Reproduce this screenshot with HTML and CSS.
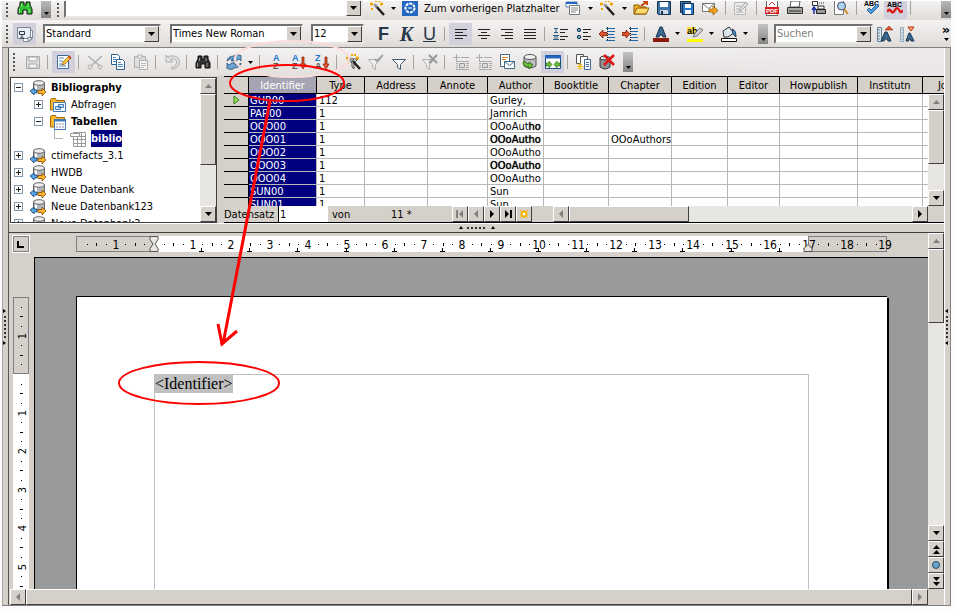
FILE: index.html
```html
<!DOCTYPE html>
<html lang="de">
  <head>
    <meta charset="UTF-8">
    <title>Writer</title>
    <link rel="stylesheet" href="styles.css">
  </head>
  <body>
    <svg class="defs">
      <symbol id="down" viewBox="0 0 7 4"><path d="M0 0h7L3.500 4z"/></symbol>
      <symbol id="up" viewBox="0 0 7 4"><path d="M0 4h7L3.500 0z"/></symbol>
      <symbol id="left" viewBox="0 0 4 8"><path d="M4 0v8L0 4z"/></symbol>
      <symbol id="right" viewBox="0 0 4 8"><path d="M0 0v8l4-4z"/></symbol>
      <symbol id="binoc" viewBox="0 0 16 16">
        <path d="M3 2h4v3h2V2h4v3l2 4v5h-5v-4H6v4H1V9l2-4z" fill="currentColor" stroke="#111"/>
        <path d="M4.500 4v3M2.500 9v4M11 4v3M12 9v4" stroke="#fff" opacity=".5"/>
      </symbol>
      <symbol id="wand" viewBox="0 0 16 16">
        <path d="M6 5l9 10" stroke="#222" stroke-width="2.500"/><path d="M5 4l3 3" stroke="#999" stroke-width="2"/>
        <path d="M1 4h3M2.500 2.500v3M6 1h2M11 4h3M12.500 2.500v3M2 9h2M9 1h2" stroke="#f0a800" stroke-width="2"/>
      </symbol>
      <symbol id="navi" viewBox="0 0 16 16">
        <path d="M0 0h16v16H0z" fill="#2467c2"/><circle cx="8" cy="8" r="4.500" fill="none" stroke="#fff" stroke-width="2" stroke-dasharray="3 1"/>
        <path d="M6 8h4" stroke="#fff"/>
      </symbol>
      <symbol id="form" viewBox="0 0 16 16">
        <path d="M1 2h11v5H1z" fill="#fff" stroke="#5a87b8"/><path d="M1 3h11" stroke="#2467c2" stroke-width="2"/>
        <path d="M4.500 5.500h10v9h-10z" fill="#fff" stroke="#777"/><path d="M6 8h7M6 10h7M6 12h5" stroke="#888"/>
      </symbol>
      <symbol id="open" viewBox="0 0 16 16">
        <path d="M1 14V5h5l1 2h6v7z" fill="#f7b32b" stroke="#8a5a00"/><path d="M1 14l3-6h12l-3 6z" fill="#ffd76a" stroke="#8a5a00"/>
        <path d="M8 6l5-4M10 1h4v4" stroke="#c9440b" stroke-width="2" fill="none"/>
      </symbol>
      <symbol id="save" viewBox="0 0 16 16">
        <path d="M1.500 1.500h13v13h-12l-1-1z" fill="#3f74ad" stroke="#14304f"/><path d="M4 2h8v5H4z" fill="#fff"/><path d="M4 10h8v4H4z" fill="#cfd8e3"/><path d="M5 11h2v3H5z" fill="#14304f"/>
      </symbol>
      <symbol id="saveas" viewBox="0 0 16 16">
        <path d="M1.500 1.500h10v11h-10z" fill="#3f74ad" stroke="#14304f"/><path d="M3.500 3.500h11v11h-11z" fill="#2b7bd0" stroke="#14304f"/><path d="M6 4h6v4H6zM6 10h6v4H6z" fill="#fff"/>
      </symbol>
      <symbol id="mail" viewBox="0 0 16 16">
        <path d="M.5 3.500h12v8H.5z" fill="#fff" stroke="#777"/><path d="M.5 3.500l6 5 6-5" fill="none" stroke="#777"/>
        <path d="M7 9h4V6l5 4.500-5 4.500v-3H7z" fill="#f6a21c" stroke="#8a4b00" stroke-width=".7"/>
      </symbol>
      <symbol id="edit" viewBox="0 0 16 16">
        <path d="M1.500 1.500h11v13h-11z" fill="#fff" stroke="#3d6b9e"/><path d="M3 4h5M3 7h4M3 10h3M3 12h7" stroke="#4b86c6"/>
        <path d="M6 11l1-3 6-6 2 2-6 6z" fill="#f7c53b" stroke="#8a5a00" stroke-width=".7"/><path d="M12 3l1.500-1.500 2 2L14 5z" fill="#d63b1f"/>
      </symbol>
      <symbol id="editoff" viewBox="0 0 16 16">
        <path d="M1.500 2.500h11v12h-11z" fill="#eee" stroke="#b5b5b5"/><path d="M3 6h5M3 9h3M3 12h7M6 11l1-3 6-6 2 2-6 6z" fill="#ddd" stroke="#aaa"/>
      </symbol>
      <symbol id="pdf" viewBox="0 0 16 16">
        <path d="M2.500.5h11v15h-11z" fill="#fff" stroke="#666"/><path d="M1 7h14v7H1z" fill="#d71f1f"/>
        <text x="2" y="13" class="pdftext">PDF</text><path d="M5 5l3-3 3 3" stroke="#b33" fill="none"/>
      </symbol>
      <symbol id="print" viewBox="0 0 16 16">
        <path d="M4 1h9l-1 6H3z" fill="#fff" stroke="#555"/><path d="M.5 7.500h15v6H.5z" fill="#a9a9a4" stroke="#333"/><path d="M2 11h12" stroke="#333"/>
      </symbol>
      <symbol id="preview" viewBox="0 0 16 16">
        <path d="M2.500 1.500h5v4h-5z" fill="#fff" stroke="#333"/><path d="M4 14V8M2 10l2-3 2 3" stroke="#1c2fa8" fill="none" stroke-width="1.500"/>
        <path d="M8 6h6v3H8z" fill="#fff" stroke="#333"/><path d="M6.500 9.500h9v4h-9z" fill="#999" stroke="#222"/><path d="M9 3h5" stroke="#333" stroke-dasharray="1 1"/>
      </symbol>
      <symbol id="zoom" viewBox="0 0 16 16">
        <path d="M1.500.5h9v14h-9z" fill="#fff" stroke="#777"/><circle cx="8.500" cy="6" r="4" fill="#a9d4ee" stroke="#446"/><path d="M11 9l4 5" stroke="#c98a2b" stroke-width="2"/>
      </symbol>
      <symbol id="spell" viewBox="0 0 16 16"><text x="0" y="6" class="abc">ABC</text><path d="M3 10l4 4 8-8-2-2-6 6-2-2z" fill="#4b9ae0" stroke="#174a80" stroke-width=".7"/></symbol>
      <symbol id="autospell" viewBox="0 0 16 16"><text x="0" y="7" class="abc">ABC</text><path d="M0 12q2-4 4-1t4-1 4 0 4 0" fill="none" stroke="#e01b1b" stroke-width="2.500"/></symbol>
      <symbol id="styles" viewBox="0 0 16 16">
        <path d="M6.500 4.500h9v8l-3 3h-6z" fill="#fff" stroke="#8a8f9e"/><path d="M.5 1.500h13v11H.5z" fill="#e8ecf3" stroke="#7a8496"/><path d="M2.500 5.500h5v3h-5zM5 8v4M3 12h4" fill="none" stroke="#333b4a"/><path d="M11 15.500v-4h4.500z" fill="#fff" stroke="#7a8496"/>
      </symbol>
      <symbol id="al" viewBox="0 0 16 16"><path d="M2 3.500h12M2 6.500h8M2 9.500h12M2 12.500h8" stroke="#222"/></symbol>
      <symbol id="ac" viewBox="0 0 16 16"><path d="M2 3.500h12M5 6.500h6M2 9.500h12M5 12.500h6" stroke="#222"/></symbol>
      <symbol id="ar" viewBox="0 0 16 16"><path d="M2 3.500h12M6 6.500h8M2 9.500h12M6 12.500h8" stroke="#222"/></symbol>
      <symbol id="aj" viewBox="0 0 16 16"><path d="M2 3.500h12M2 6.500h12M2 9.500h12M2 12.500h12" stroke="#222"/></symbol>
      <symbol id="num" viewBox="0 0 16 16"><path d="M1 2.500h4M3 2v5M1 6.500h4M0 9.500h6M2 9v5M4 9v5M0 13.500h6" stroke="#2a5b80"/><path d="M7 3.500h8M7 6.500h5M7 10.500h8M7 13.500h5" stroke="#222"/></symbol>
      <symbol id="bul" viewBox="0 0 16 16"><circle cx="3" cy="4" r="1.700" fill="#6ab" stroke="#135"/><circle cx="3" cy="11" r="1.700" fill="#6ab" stroke="#135"/><path d="M7 3.500h8M7 6.500h5M7 10.500h8M7 13.500h5" stroke="#222"/></symbol>
      <symbol id="outd" viewBox="0 0 16 16"><path d="M7 2.500h9M9 5.500h7M9 8.500h6M9 11.500h7M7 14.500h9" stroke="#2467a8"/><path d="M8.500 1v14" stroke="#222" stroke-dasharray="1 1"/><path d="M0 8l4-4v2.500h4v3H4V12z" fill="#e2552b" stroke="#7a1c00" stroke-width=".8"/></symbol>
      <symbol id="ind" viewBox="0 0 16 16"><path d="M7 2.500h9M9 5.500h7M9 8.500h6M9 11.500h7M7 14.500h9" stroke="#2467a8"/><path d="M8.500 1v14" stroke="#222" stroke-dasharray="1 1"/><path d="M8 8L4 4v2.500H0v3h4V12z" fill="#e2552b" stroke="#7a1c00" stroke-width=".8"/></symbol>
      <symbol id="fcolor" viewBox="0 0 16 16"><path d="M3 11L7 1h2l4 10h-3L9.500 9h-3L6 11z" fill="#3c6a90" stroke="#14304f"/><path d="M0 12h16v4H0z" fill="#8b1a0e"/></symbol>
      <symbol id="hilite" viewBox="0 0 16 16"><path d="M0 1h9v7H0z" fill="#ffe14a"/><text x="0" y="8" class="abl">ab</text><path d="M6 11l2-4 5-5 3 2-6 6z" fill="#ccc" stroke="#555" stroke-width=".7"/><path d="M0 13h16v3H0z" fill="#ff0"/></symbol>
      <symbol id="bucket" viewBox="0 0 16 16"><path d="M2 5l6-4 5 6-6 4H3z" fill="#d9e4ea" stroke="#333"/><path d="M11 3q4 1 4 8l-3-3z" fill="#4a9ad4" stroke="#235"/><path d="M.5 12.500h15v3H.5z" fill="#fff" stroke="#111"/></symbol>
      <symbol id="aup" viewBox="0 0 16 16"><path d="M.5 1.500h4v14h-4zM1 4h2M1 7h2M1 10h2M1 13h2" fill="#dce6ee" stroke="#6a8296"/><path d="M4 15l4-9h2l4 9h-3l-.5-2h-3L7 15z" fill="#3c6a90" stroke="#14304f"/><path d="M8 4l4-4 4 4z" fill="#e2552b" stroke="#7a1c00" stroke-width=".5"/></symbol>
      <symbol id="adown" viewBox="0 0 16 16"><path d="M.5 1.500h3v14h-3zM1 4h2M1 7h2M1 10h2M1 13h2" fill="#dce6ee" stroke="#9aacba"/><path d="M6 15l3-8h1l4 8h-3l-.5-2H9l-.5 2z" fill="#3c6a90" stroke="#14304f"/><path d="M8 1h6l-3 4z" fill="#ffb08a" stroke="#c02a00"/></symbol>
      <symbol id="saveoff" viewBox="0 0 16 16"><path d="M1.500 2.500h13v12h-13z" fill="#ddd" stroke="#aaa"/><path d="M4 3h8v4H4zM4 10h8v4H4z" fill="#f4f4f4" stroke="#aaa"/></symbol>
      <symbol id="cut" viewBox="0 0 16 16"><path d="M1 2l12 10M15 2L4 12" stroke="#b0b0b0" stroke-width="1.500"/><circle cx="3" cy="13" r="2" fill="none" stroke="#b0b0b0"/><circle cx="13" cy="13" r="2" fill="none" stroke="#b0b0b0"/></symbol>
      <symbol id="copy" viewBox="0 0 16 16"><path d="M1.500.5h6l2 2v8h-8z" fill="#fff" stroke="#2d6391"/><path d="M6.500 5.500h6l2 2v8h-8z" fill="#fff" stroke="#2d6391"/><path d="M3 3.500h3M3 5.500h3M3 7.500h3M8 8.500h3M8 10.500h5M8 12.500h5" stroke="#4b8cc2"/></symbol>
      <symbol id="paste" viewBox="0 0 16 16"><path d="M1.500 2.500h11v11h-11z" fill="#ddd" stroke="#b0b0b0"/><path d="M5 1h4v3H5zM6.500 6.500h8v9h-8z" fill="#f4f4f4" stroke="#b0b0b0"/><path d="M8 9.500h5M8 11.500h5M8 13.500h3" stroke="#bbb"/></symbol>
      <symbol id="undo" viewBox="0 0 16 16"><path d="M2 1v7h7L6.500 5.500q5-2 6 2T7 14l2 1.500q7-3 6.500-8T9 2 4.500 3.500z" fill="#e0e0e0" stroke="#b0b0b0"/></symbol>
      <symbol id="refresh" viewBox="0 0 16 16"><path d="M1 7q1-5 7-5l2-1.500 5 1V7l-2-2-3 2H5l2-2Q4 4 1 7zM15 9q-1 5-7 5l-2 1.500-5-1V9l2 2 3-2h5l-2 2q3 1 6-2z" fill="#6fa5cf" stroke="#1f4c75" stroke-width=".8"/></symbol>
      <symbol id="sort" viewBox="0 0 16 16"><text x="5" y="7" class="sa">A</text><text x="5" y="15" class="sz">Z</text></symbol>
      <symbol id="sortaz" viewBox="0 0 16 16"><text x="1" y="7" class="sa">A</text><text x="1" y="15" class="sz">Z</text><path d="M11 3h2v7h2l-3 5-3-5h2z" fill="#e2552b" stroke="#7a1c00" stroke-width=".7"/></symbol>
      <symbol id="sortza" viewBox="0 0 16 16"><text x="1" y="7" class="sa">Z</text><text x="1" y="15" class="sz">A</text><path d="M11 3h2v7h2l-3 5-3-5h2z" fill="#e2552b" stroke="#7a1c00" stroke-width=".7"/></symbol>
      <symbol id="funnel" viewBox="0 0 16 16"><path d="M1.500 5.500h13l-5 5v5l-3-2v-3z" fill="#f6f6f6" stroke="#445a6c"/></symbol>
      <symbol id="autofilter" viewBox="0 0 16 16"><path d="M3 5h10L9 9v6l-2-2V9z" fill="#eee" stroke="#444"/><use href="#wand"/></symbol>
      <symbol id="filteron" viewBox="0 0 16 16"><path d="M.5 5.500h12l-5 5v5l-3-2v-3z" fill="#eee" stroke="#b0b0b0"/><path d="M7 5l2 2 6-6" stroke="#a5a5a5" fill="none" stroke-width="2"/></symbol>
      <symbol id="filteroff" viewBox="0 0 16 16"><path d="M.5 5.500h12l-5 5v5l-3-2v-3z" fill="#eee" stroke="#b0b0b0"/><path d="M7 1l8 8M15 1L7 9" stroke="#999" stroke-width="2"/></symbol>
      <symbol id="totext" viewBox="0 0 16 16"><path d="M3.500 0v7M0 3.500h7M8 3.500h8M3 7.500h13M3 9.500h2M3 11.500h2M3 13.500h2M13 9.500h3M13 11.500h3M13 13.500h3M3 15.500h13" stroke="#aaa"/><path d="M6.500 9.500h5v4h-5z" fill="#ddd" stroke="#999"/></symbol>
      <symbol id="mailmerge" viewBox="0 0 16 16"><path d="M1.500.5h9v12h-9z" fill="#fff" stroke="#3f6a8a"/><path d="M3 3.500h6M3 5.500h4" stroke="#e07a20"/><path d="M5.500 7.500h10v7h-10z" fill="#fff" stroke="#3f6a8a"/><path d="M5.500 7.500l5 4 5-4" fill="none" stroke="#3f6a8a"/></symbol>
      <symbol id="dbsrc" viewBox="0 0 16 16"><path d="M2 3v9q6 4 12 0V3z" fill="#b9bdc2" stroke="#555"/><ellipse cx="8" cy="3" rx="6" ry="2.500" fill="#eee" stroke="#555"/><path d="M1 8q0 5 6 5v2l4-4-4-3v2q-3 0-4-3z" fill="#6cbf3a" stroke="#24610b" stroke-width=".8"/></symbol>
      <symbol id="explorer" viewBox="0 0 16 16"><path d="M.5 1.500h15v13H.5z" fill="#fff" stroke="#1d4f86"/><path d="M0 3h16" stroke="#2467c2" stroke-width="3"/><path d="M1 9h3V7l3 3.500L4 14v-2H1zM15 9h-3V7l-3 3.500 3 3.500v-2h3z" fill="#6cbf3a" stroke="#24610b" stroke-width=".6"/></symbol>
      <symbol id="docs" viewBox="0 0 16 16"><path d="M.5.5h7v9h-7z" fill="#fff" stroke="#555"/><path d="M4.500 2.500h7v10h-7z" fill="#fff" stroke="#555"/><path d="M8.500 5.500h6v10h-6z" fill="#fff" stroke="#3f6a9a"/><path d="M10 8.500h3M10 10.500h3M10 12.500h3" stroke="#3f6a9a"/><path d="M4 9v7M1 12.500h7M2 10l4 5M6 10l-4 5" stroke="#f3c321"/></symbol>
      <symbol id="dbdel" viewBox="0 0 16 16"><path d="M1 4v9q5 4 10 0V4z" fill="#8f9297" stroke="#333"/><ellipse cx="6" cy="4" rx="5" ry="2" fill="#ddd" stroke="#333"/><path d="M5 1l10 10M15 1L5 11" stroke="#e01515" stroke-width="2.500"/></symbol>
      <symbol id="db" viewBox="0 0 16 16"><path d="M3.500 3v7q5 3 11 0V3z" fill="#b4b8bd" stroke="#666"/><path d="M6 5v6" stroke="#fff" stroke-width="2"/><ellipse cx="9" cy="3" rx="5.500" ry="2.300" fill="#eee" stroke="#666"/><path d="M0 11l4-3v2h3v3H4v2z" fill="#58a7e8" stroke="#143f70" stroke-width=".8"/><path d="M16 12l-4-4v2.500H8v3h4V16z" fill="#ffb52b" stroke="#8a4b00" stroke-width=".8"/></symbol>
      <symbol id="fquery" viewBox="0 0 16 16"><path d="M.5 13V2.500l1-1h4l1 2h8V13z" fill="#f9b92f" stroke="#a36a00"/><path d="M3.500 5.500h12v9h-12z" fill="#fff" stroke="#3f7ab8"/><path d="M5.500 9.500h5v3h-5zM8.500 7.500h5v3h-5z" fill="#cfe2f5" stroke="#3f7ab8"/></symbol>
      <symbol id="ftable" viewBox="0 0 16 16"><path d="M.5 13V2.500l1-1h4l1 2h8V13z" fill="#f9b92f" stroke="#a36a00"/><path d="M4.500 5.500h11v10h-11z" fill="#fff" stroke="#3f7ab8"/><path d="M4 6.500h12" stroke="#3f7ab8" stroke-width="2"/><path d="M6 10h8M6 13h8" stroke="#88a" stroke-dasharray="2 1"/></symbol>
      <symbol id="table" viewBox="0 0 16 16"><path d="M3.500 1.500h12v14h-12zM3 5.500h12M3 8.500h12M3 12.500h12M7.500 1v14M11.500 1v14" fill="#fff" stroke="#999"/><path d="M.5 2.500h9v3h-9z" fill="#fff" stroke="#999"/></symbol>
    </svg>

    <div class="app">
      <div class="toolbar url-bar">
        <i class="grip"></i>
        <button class="tool find"><svg class="ico"><use href="#binoc"/></svg></button>
        <button class="more"><svg class="arr"><use href="#down"/></svg></button>
        <i class="grip"></i>
        <div class="combo load-url"><input type="text" aria-label="URL"><button class="drop"><svg class="arr"><use href="#down"/></svg></button></div>
        <button class="tool"><svg class="ico"><use href="#wand"/></svg></button>
        <button class="dd"><svg class="arr"><use href="#down"/></svg></button>
        <button class="tool label"><svg class="ico"><use href="#navi"/></svg><span>Zum vorherigen Platzhalter</span></button>
        <button class="tool"><svg class="ico"><use href="#form"/></svg></button>
        <button class="dd"><svg class="arr"><use href="#down"/></svg></button>
        <button class="tool"><svg class="ico"><use href="#wand"/></svg></button>
        <button class="dd"><svg class="arr"><use href="#down"/></svg></button>
        <button class="tool"><svg class="ico"><use href="#open"/></svg></button>
        <button class="tool"><svg class="ico"><use href="#save"/></svg></button>
        <button class="tool"><svg class="ico"><use href="#saveas"/></svg></button>
        <button class="tool"><svg class="ico"><use href="#mail"/></svg></button>
        <i class="sep"></i>
        <button class="tool"><svg class="ico"><use href="#editoff"/></svg></button>
        <i class="sep"></i>
        <button class="tool"><svg class="ico"><use href="#pdf"/></svg></button>
        <button class="tool"><svg class="ico"><use href="#print"/></svg></button>
        <button class="tool"><svg class="ico"><use href="#preview"/></svg></button>
        <button class="tool"><svg class="ico"><use href="#zoom"/></svg></button>
        <i class="sep"></i>
        <button class="tool"><svg class="ico"><use href="#spell"/></svg></button>
        <button class="tool on"><svg class="ico"><use href="#autospell"/></svg></button>
        <i class="sep"></i>
        <button class="more end"><svg class="arr"><use href="#down"/></svg></button>
      </div>

      <div class="toolbar format-bar">
        <i class="grip"></i>
        <button class="tool on"><svg class="ico"><use href="#styles"/></svg></button>
        <div class="combo style-name"><select aria-label="Vorlage"><option>Standard</option></select><button class="drop"><svg class="arr"><use href="#down"/></svg></button></div>
        <div class="combo font-name"><select aria-label="Schriftart"><option>Times New Roman</option></select><button class="drop"><svg class="arr"><use href="#down"/></svg></button></div>
        <div class="combo font-size"><select aria-label="Schriftgröße"><option>12</option></select><button class="drop"><svg class="arr"><use href="#down"/></svg></button></div>
        <button class="tool char bold">F</button>
        <button class="tool char italic">K</button>
        <button class="tool char under">U</button>
        <i class="sep"></i>
        <button class="tool on"><svg class="ico"><use href="#al"/></svg></button>
        <button class="tool"><svg class="ico"><use href="#ac"/></svg></button>
        <button class="tool"><svg class="ico"><use href="#ar"/></svg></button>
        <button class="tool"><svg class="ico"><use href="#aj"/></svg></button>
        <i class="sep"></i>
        <button class="tool"><svg class="ico"><use href="#num"/></svg></button>
        <button class="tool"><svg class="ico"><use href="#bul"/></svg></button>
        <button class="tool"><svg class="ico"><use href="#outd"/></svg></button>
        <button class="tool"><svg class="ico"><use href="#ind"/></svg></button>
        <i class="sep"></i>
        <button class="tool"><svg class="ico"><use href="#fcolor"/></svg></button>
        <button class="dd"><svg class="arr"><use href="#down"/></svg></button>
        <button class="tool"><svg class="ico"><use href="#hilite"/></svg></button>
        <button class="dd"><svg class="arr"><use href="#down"/></svg></button>
        <button class="tool"><svg class="ico"><use href="#bucket"/></svg></button>
        <button class="dd"><svg class="arr"><use href="#down"/></svg></button>
        <button class="more"><svg class="arr"><use href="#down"/></svg></button>
        <div class="combo search"><input type="text" placeholder="Suchen" aria-label="Suchen"><button class="drop"><svg class="arr"><use href="#down"/></svg></button></div>
        <button class="tool"><svg class="ico"><use href="#aup"/></svg></button>
        <button class="tool"><svg class="ico"><use href="#adown"/></svg></button>
        <button class="more end"><span>»</span><svg class="arr"><use href="#down"/></svg></button>
      </div>

      <div class="frame">
        <div class="dock"><svg class="dock-grip" viewBox="0 0 4 36"><path d="M0 0l3 2-3 2zM0 32l3 2-3 2z"/><path d="M2 7v22" stroke="#333" stroke-width="2" stroke-dasharray="2 2"/></svg></div>
        <div class="inner">
          <div class="toolbar table-bar">
            <i class="grip"></i>
            <button class="tool first"><svg class="ico"><use href="#saveoff"/></svg></button>
            <i class="sep"></i>
            <button class="tool on"><svg class="ico"><use href="#edit"/></svg></button>
            <i class="sep"></i>
            <button class="tool"><svg class="ico"><use href="#cut"/></svg></button>
            <button class="tool"><svg class="ico"><use href="#copy"/></svg></button>
            <button class="tool"><svg class="ico"><use href="#paste"/></svg></button>
            <i class="sep"></i>
            <button class="tool"><svg class="ico"><use href="#undo"/></svg></button>
            <i class="sep"></i>
            <button class="tool"><svg class="ico"><use href="#binoc"/></svg></button>
            <i class="sep"></i>
            <button class="tool"><svg class="ico"><use href="#refresh"/></svg></button>
            <button class="dd"><svg class="arr"><use href="#down"/></svg></button>
            <i class="sep"></i>
            <button class="tool"><svg class="ico"><use href="#sort"/></svg></button>
            <button class="tool"><svg class="ico"><use href="#sortaz"/></svg></button>
            <button class="tool"><svg class="ico"><use href="#sortza"/></svg></button>
            <i class="sep"></i>
            <button class="tool"><svg class="ico"><use href="#autofilter"/></svg></button>
            <button class="tool"><svg class="ico"><use href="#filteron"/></svg></button>
            <button class="tool"><svg class="ico"><use href="#funnel"/></svg></button>
            <i class="sep"></i>
            <button class="tool"><svg class="ico"><use href="#filteroff"/></svg></button>
            <i class="sep"></i>
            <button class="tool"><svg class="ico"><use href="#totext"/></svg></button>
            <button class="tool"><svg class="ico"><use href="#totext"/></svg></button>
            <button class="tool"><svg class="ico"><use href="#mailmerge"/></svg></button>
            <button class="tool"><svg class="ico"><use href="#dbsrc"/></svg></button>
            <button class="tool on"><svg class="ico"><use href="#explorer"/></svg></button>
            <i class="sep"></i>
            <button class="tool"><svg class="ico"><use href="#docs"/></svg></button>
            <button class="tool"><svg class="ico"><use href="#dbdel"/></svg></button>
            <button class="more"><svg class="arr"><use href="#down"/></svg></button>
          </div>

          <div class="sources">
            <div class="explorer">
              <ul class="tree">
                <li><i class="box minus"></i><svg class="ico"><use href="#db"/></svg><b>Bibliography</b></li>
                <li class="l2"><i class="box plus"></i><svg class="ico"><use href="#fquery"/></svg><span>Abfragen</span></li>
                <li class="l2"><i class="box minus"></i><svg class="ico"><use href="#ftable"/></svg><b>Tabellen</b></li>
                <li class="l3"><i class="elbow"></i><svg class="ico"><use href="#table"/></svg><b class="picked">biblio</b></li>
                <li><i class="box plus"></i><svg class="ico"><use href="#db"/></svg><span>ctimefacts_3.1</span></li>
                <li><i class="box plus"></i><svg class="ico"><use href="#db"/></svg><span>HWDB</span></li>
                <li><i class="box plus"></i><svg class="ico"><use href="#db"/></svg><span>Neue Datenbank</span></li>
                <li><i class="box plus"></i><svg class="ico"><use href="#db"/></svg><span>Neue Datenbank123</span></li>
                <li><i class="box plus"></i><svg class="ico"><use href="#db"/></svg><span>Neue Datenbank2</span></li>
              </ul>
              <div class="vscroll">
                <button class="bevel off"><svg class="arr"><use href="#up"/></svg></button>
                <i class="thumb tree-thumb"></i><i class="track"></i>
                <button class="bevel"><svg class="arr"><use href="#down"/></svg></button>
              </div>
            </div>

            <div class="browser">
              <div class="grid">
                <table>
                  <colgroup><col><col><col><col><col><col><col><col><col><col><col><col><col></colgroup>
                  <thead>
                    <tr><th></th><th class="sel">Identifier</th><th>Type</th><th>Address</th><th>Annote</th><th>Author</th><th>Booktitle</th><th>Chapter</th><th>Edition</th><th>Editor</th><th>Howpublish</th><th>Institutn</th><th>Journal</th></tr>
                  </thead>
                  <tbody>
                    <tr><th><svg class="current" viewBox="0 0 7 10"><path d="M1 1v8l5-4z" fill="#9be35a" stroke="#2a7a10"/></svg></th><td class="sel">GUR00</td><td>112</td><td></td><td></td><td>Gurley,</td><td></td><td></td><td></td><td></td><td></td><td></td><td></td></tr>
                    <tr><th></th><td class="sel">PAR00</td><td>1</td><td></td><td></td><td>Jamrich</td><td></td><td></td><td></td><td></td><td></td><td></td><td></td></tr>
                    <tr><th></th><td class="sel">OOO00</td><td>1</td><td></td><td></td><td>OOoAut<span class="heavy">ho</span></td><td></td><td></td><td></td><td></td><td></td><td></td><td></td></tr>
                    <tr><th></th><td class="sel">OOO01</td><td>1</td><td></td><td></td><td class="heavy">OOoAutho</td><td></td><td>OOoAuthors</td><td></td><td></td><td></td><td></td><td></td></tr>
                    <tr><th></th><td class="sel">OOO02</td><td>1</td><td></td><td></td><td>OOoAutho</td><td></td><td></td><td></td><td></td><td></td><td></td><td></td></tr>
                    <tr><th></th><td class="sel">OOO03</td><td>1</td><td></td><td></td><td class="heavy">OOoAutho</td><td></td><td></td><td></td><td></td><td></td><td></td><td></td></tr>
                    <tr><th></th><td class="sel">OOO04</td><td>1</td><td></td><td></td><td>OOoAutho</td><td></td><td></td><td></td><td></td><td></td><td></td><td></td></tr>
                    <tr><th></th><td class="sel">SUN00</td><td>1</td><td></td><td></td><td>Sun</td><td></td><td></td><td></td><td></td><td></td><td></td><td></td></tr>
                    <tr><th></th><td class="sel">SUN01</td><td>1</td><td></td><td></td><td>Sun</td><td></td><td></td><td></td><td></td><td></td><td></td><td></td></tr>
                  </tbody>
                </table>
                <div class="vscroll grid-scroll">
                  <button class="bevel off"><svg class="arr"><use href="#up"/></svg></button>
                  <i class="thumb grid-thumb"></i><i class="track"></i>
                  <button class="bevel"><svg class="arr"><use href="#down"/></svg></button>
                </div>
              </div>
              <div class="record-bar">
                <label for="record">Datensatz</label>
                <input id="record" type="text" value="1">
                <span class="of">von</span><span class="count">11 *</span>
                <button class="bevel off"><svg class="nav" viewBox="0 0 8 8"><path d="M1 0v8" stroke="#808080" stroke-width="2"/><path d="M7 0v8L3 4z"/></svg></button>
                <button class="bevel off"><svg class="side"><use href="#left"/></svg></button>
                <button class="bevel"><svg class="side"><use href="#right"/></svg></button>
                <button class="bevel"><svg class="nav" viewBox="0 0 8 8"><path d="M7 0v8" stroke="#000" stroke-width="2"/><path d="M1 0v8l4-4z"/></svg></button>
                <button class="bevel"><svg class="nav" viewBox="0 0 8 8"><circle cx="4" cy="4" r="2.500" fill="#fff" stroke="#f5b400" stroke-width="2"/><path d="M0 0l2 2M8 0L6 2M0 8l2-2M8 8L6 6" stroke="#f5b400"/></svg></button>
                <div class="hscroll">
                  <button class="bevel off"><svg class="side"><use href="#left"/></svg></button>
                  <i class="thumb hthumb"></i><i class="track"></i>
                  <button class="bevel"><svg class="side"><use href="#right"/></svg></button>
                </div>
              </div>
            </div>
          </div>

          <div class="splitter"><svg class="split-grip" viewBox="0 0 36 4"><path d="M0 3l2-3 2 3zM32 3l2-3 2 3z"/><path d="M8 2h20" stroke="#333" stroke-width="2" stroke-dasharray="2 2"/></svg></div>

          <div class="writer">
            <div class="sheet">
              <div class="ruler-row">
                <button class="tabstop" aria-label="Tabulator"><svg viewBox="0 0 8 8"><path d="M1 1v6h6" fill="none" stroke="#000" stroke-width="2"/></svg></button>
                <svg id="hruler" class="hruler"></svg>
              </div>
              <div class="canvas-row">
                <svg id="vruler" class="vruler"></svg>
                <div class="canvas">
                  <div class="page"><div class="text-area"><span class="field">&lt;Identifier&gt;</span></div></div>
                </div>
              </div>
            </div>
            <div class="vscroll">
              <button class="bevel off"><svg class="arr"><use href="#up"/></svg></button>
              <i class="thumb doc-thumb"></i><i class="track"></i>
              <button class="bevel"><svg class="arr"><use href="#down"/></svg></button>
              <button class="bevel stack"><svg class="arr"><use href="#up"/></svg><svg class="arr"><use href="#up"/></svg></button>
              <button class="bevel"><svg class="nav" viewBox="0 0 8 8"><circle cx="4" cy="4" r="3.500" fill="#6ba3c9" stroke="#1f4a6b"/></svg></button>
              <button class="bevel stack"><svg class="arr"><use href="#down"/></svg><svg class="arr"><use href="#down"/></svg></button>
            </div>
          </div>
          <div class="hscroll doc-hscroll">
            <button class="bevel off"><svg class="side"><use href="#left"/></svg></button>
            <i class="thumb wide"></i>
            <button class="bevel off"><svg class="side"><use href="#right"/></svg></button>
          </div>
        </div>
        <div class="dock right"><svg class="dock-grip" viewBox="0 0 4 36"><path d="M3 0L0 2l3 2zM3 32l-3 2 3 2z"/><path d="M2 7v22" stroke="#333" stroke-width="2" stroke-dasharray="2 2"/></svg></div>
      </div>
    </div>

    <!-- drag and drop marks -->
    <svg class="marks" width="400" height="420">
      <ellipse class="faint" cx="292" cy="59" rx="57" ry="18"/>
      <ellipse cx="287" cy="83" rx="57" ry="18"/>
      <path class="thick" d="M270 101L223 344M218 324l4 20 15-13"/>
      <ellipse cx="199" cy="383" rx="80" ry="21"/>
    </svg>

    <script src="ruler.js"></script>
  </body>
</html>
```
FILE: styles.css
```css
*{
    box-sizing: border-box;
}
body{
    margin: 0;
    background: #fdfcfd;
    font: 11px/13px "DejaVu Sans Condensed", "DejaVu Sans", sans-serif;
    color: #000;
}
button, input, select{
    margin: 0;
    padding: 0;
    border: 0;
    border-radius: 0;
    background: none;
    font: inherit;
    color: inherit;
    outline: 0;
}
.defs{
    display: none;
}
.app{
    display: flex;
    flex-direction: column;
    height: calc(100vh - 5px);
    margin: 0 5px 0 2px;
    border-bottom: 1px solid #808080;
    background: #d5d1ca;
}

/* toolbars */
.toolbar{
    display: flex;
    flex: none;
    align-items: center;
    overflow: hidden;
    background: linear-gradient(#f4f2f2, #dedbd7);
}
.url-bar{
    height: 20px;
    padding-bottom: 5px;
    border-top: 1px solid #fff;
}
.format-bar{
    height: 28px;
    border-bottom: 1px solid #808080;
}
.table-bar{
    height: 28px;
    background: linear-gradient(90deg, transparent 60%, #ece8e9), linear-gradient(#f4f2f2, #e2dfdc);
}
.grip{
    flex: none;
    width: 2px;
    height: 18px;
    margin: 0 5px 0 4px;
    background: repeating-linear-gradient(#555 0 2px, transparent 2px 4px);
}
.tool{
    display: flex;
    flex: none;
    align-items: center;
    justify-content: center;
    width: 23px;
    height: 22px;
}
.on{
    background: #d3d0dd;
}
.label{
    width: auto;
    margin-right: 2px;
    padding-left: 3px;
    gap: 6px;
    white-space: nowrap;
}
.ico{
    flex: none;
    width: 16px;
    height: 16px;
    color: #333;
}
.find .ico{
    color: #2fc42f;
}
.arr{
    display: block;
    width: 7px;
    height: 4px;
}
.side{
    display: block;
    width: 4px;
    height: 8px;
}
.nav{
    display: block;
    width: 8px;
    height: 8px;
}
.dd{
    display: flex;
    flex: none;
    justify-content: center;
    width: 11px;
}
.dd .arr{
    width: 5px;
    height: 3px;
}
.sep{
    flex: none;
    width: 1px;
    height: 14px;
    margin: 0 4px 0 3px;
    background: #a5a29d;
}
.more{
    display: flex;
    flex: none;
    flex-direction: column;
    align-items: center;
    justify-content: flex-end;
    width: 10px;
    height: 20px;
    padding-bottom: 3px;
    background: linear-gradient(#c4c2c0, #858585);
}
.more .arr{
    width: 5px;
    height: 3px;
}
.end{
    margin-left: auto;
}
.find + .more{
    margin: 0 2px 0 5px;
}
.combo{
    display: flex;
    flex: none;
    height: 20px;
    border: 2px solid;
    border-color: #707070 #e8e6e2 #e8e6e2 #707070;
    background: #fff;
}
.combo select, .combo input{
    flex: 1;
    min-width: 0;
    padding-left: 1px;
    appearance: none;
}
.combo input::placeholder{
    color: #808080;
}
.drop{
    display: flex;
    flex: none;
    align-items: center;
    justify-content: center;
    width: 15px;
    border: 1px solid;
    border-color: #fff #404040 #404040 #fff;
    background: #d5d1ca;
}
.load-url{
    flex: 1;
    max-width: 299px;
    margin-right: 2px;
}
.style-name{
    width: 118px;
    margin: 0 9px 0 7px;
}
.font-name{
    width: 133px;
    margin-right: 8px;
}
.font-size{
    width: 53px;
    margin-right: 8px;
}
.search{
    width: 99px;
    margin: 0 0 0 6px;
}
.format-bar .more:not(.end){
    margin-left: 7px;
}
.format-bar .more span{
    font: bold 13px/12px "DejaVu Sans", sans-serif;
}
.format-bar .end{
    background: none;
    justify-content: space-between;
}
.char{
    color: #27374a;
    font: bold 18px/20px "Liberation Sans", Arial, sans-serif;
}
.italic{
    font-family: "Liberation Serif", serif;
    font-style: italic;
    font-size: 20px;
}
.under{
    font-weight: normal;
    text-decoration: underline;
}
.first{
    margin-left: 1px;
}
.table-bar .more{
    margin-left: 5px;
}
.pdftext{
    font: bold 6px "Liberation Sans", sans-serif;
    fill: #fff;
}
.abc{
    font: bold 7px "Liberation Sans", sans-serif;
}
.abl{
    font: bold 9px "Liberation Sans", sans-serif;
}
.sa, .sz{
    font: bold 9px "Liberation Sans", sans-serif;
    fill: #1b76d0;
}
.sz{
    fill: #555;
}

/* bevelled parts */
.bevel, .thumb{
    display: flex;
    flex: none;
    align-items: center;
    justify-content: center;
    width: 16px;
    height: 16px;
    border: 1px solid;
    border-color: #fff #404040 #404040 #fff;
    background: #d5d1ca;
}
.off{
    fill: #808080;
}
.stack{
    flex-direction: column;
    gap: 1px;
}
.track{
    flex: 1;
}
.vscroll{
    display: flex;
    flex: none;
    flex-direction: column;
    width: 16px;
    background: #e8e6e1;
}
.hscroll{
    display: flex;
    height: 16px;
    background: #e8e6e1;
}
.tree-thumb{
    height: 71px;
}
.grid-thumb{
    height: 54px;
}
.doc-thumb{
    height: 74px;
}
.hthumb{
    width: 120px;
}
.wide{
    flex: 1;
}

/* frame */
.frame{
    display: flex;
    flex: 1;
    min-height: 0;
}
.dock{
    display: flex;
    flex: none;
    align-items: center;
    width: 7px;
    border-left: 1px solid #a9a6a0;
    border-right: 1px solid #555;
}
.right{
    border-left: 1px solid #fff;
    border-right: 1px solid #808080;
}
.dock-grip{
    width: 4px;
    height: 36px;
}
.inner{
    display: flex;
    flex: 1;
    flex-direction: column;
    min-width: 0;
}
.sources{
    display: flex;
    flex: none;
    height: 147px;
    padding-left: 1px;
    gap: 7px;
}
.explorer{
    display: flex;
    flex: none;
    width: 207px;
    margin-top: 1px;
    border: 1px solid #404040;
    background: #fff;
}
.tree{
    flex: 1;
    margin: 0;
    padding: 1px 0 0 3px;
    overflow: hidden;
    list-style: none;
}
.tree li{
    display: flex;
    align-items: center;
    height: 17px;
    white-space: nowrap;
}
.tree .l2{
    padding-left: 20px;
}
.tree .l3{
    padding-left: 40px;
}
.tree .ico{
    margin: 0 5px 0 7px;
}
.box{
    width: 9px;
    height: 9px;
    border: 1px solid #8497ad;
    background: linear-gradient(#222, #222) 50% 50% / 5px 1px no-repeat;
}
.plus{
    background: linear-gradient(#222, #222) 50% 50% / 5px 1px no-repeat, linear-gradient(#222, #222) 50% 50% / 1px 5px no-repeat;
}
.elbow{
    width: 9px;
    height: 9px;
    margin-bottom: 8px;
    border-left: 1px solid #b5b5b5;
    border-bottom: 1px solid #b5b5b5;
}
.picked{
    background: #000080;
    color: #fff;
    line-height: 17px;
}
.browser{
    display: flex;
    flex: 1;
    flex-direction: column;
    min-width: 0;
    border-top: 1px solid #000;
    border-bottom: 1px solid #000;
}
.grid{
    position: relative;
    flex: 1;
    min-height: 0;
    overflow: hidden;
    background: #fff;
}
.grid-scroll{
    position: absolute;
    top: 17px;
    right: 0;
    bottom: 0;
}
table{
    width: 764px;
    table-layout: fixed;
    border-collapse: separate;
    border-spacing: 0;
}
col{ width: 65px; }
col:nth-child(1){ width: 25px; }
col:nth-child(2){ width: 68px; }
col:nth-child(3){ width: 48px; }
col:nth-child(4), col:nth-child(8){ width: 63px; }
col:nth-child(5){ width: 60px; }
col:nth-child(6), col:nth-child(9){ width: 56px; }
col:nth-child(10){ width: 52px; }
col:nth-child(11){ width: 78px; }
th{
    padding: 0;
    border-right: 1px solid #000;
    border-bottom: 1px solid #000;
    background: #d5d1ca;
    font-weight: normal;
}
thead th{
    height: 17px;
}
thead .sel{
    background: #a6a3b3;
    color: #fff;
}
td{
    height: 13px;
    padding: 1px 0 0 2px;
    border-right: 1px solid #b9b9b9;
    border-bottom: 1px solid #b9b9b9;
    line-height: 11px;
    overflow: hidden;
    white-space: nowrap;
}
td.sel{
    padding-left: 1px;
    background: #000080;
    color: #fff;
}
.heavy{
    text-shadow: 0 0 1px #000;
}
.current{
    display: block;
    width: 7px;
    height: 10px;
    margin: 0 auto;
}
.record-bar{
    display: flex;
    flex: none;
    align-items: center;
    height: 16px;
}
.record-bar label{
    width: 54px;
}
.record-bar input{
    width: 50px;
    height: 16px;
    padding-left: 1px;
    border-left: 1px solid #000;
    background: #fff;
}
.of{
    width: 63px;
    padding-left: 4px;
}
.count{
    width: 61px;
}
.record-bar .hscroll{
    flex: 1;
    margin: 0 16px 0 21px;
}

/* document */
.splitter{
    display: flex;
    flex: none;
    align-items: center;
    justify-content: center;
    height: 10px;
    border-top: 1px solid #fff;
    border-bottom: 1px solid #404040;
}
.split-grip{
    width: 36px;
    height: 4px;
}
.writer{
    display: flex;
    flex: 1;
    min-height: 0;
}
.sheet{
    display: flex;
    flex: 1;
    flex-direction: column;
    min-width: 0;
}
.ruler-row{
    display: flex;
    flex: none;
    height: 24px;
    padding: 3px 0 0 4px;
}
.tabstop{
    display: flex;
    flex: none;
    align-items: center;
    justify-content: center;
    width: 16px;
    height: 16px;
    border: 1px solid #808080;
    outline: 1px solid #fff;
}
.tabstop svg{
    width: 8px;
    height: 8px;
}
.hruler{
    flex: 1;
    height: 18px;
    margin-left: 47px;
    font-size: 12px;
}
.canvas-row{
    display: flex;
    flex: 1;
    min-height: 0;
}
.vruler{
    flex: none;
    width: 16px;
    height: auto;
    margin: 40px 5px 0 4px;
    font-size: 11px;
}
.canvas{
    flex: 1;
    overflow: hidden;
    padding: 38px 41px 0 41px;
    border-top: 1px solid #000;
    border-left: 1px solid #000;
    background: #999a9a;
}
.page{
    height: 100%;
    padding: 77px 78px 0 77px;
    border-top: 1px solid #000;
    border-left: 1px solid #000;
    background: #fff;
    box-shadow: 2px 2px #000;
}
.text-area{
    height: 100%;
    border: 1px solid #c0c0c0;
    border-bottom: 0;
    font: 16px/18px "Liberation Serif", "Times New Roman", serif;
}
.field{
    display: inline-block;
    background: #c0c0c0;
}
.doc-hscroll{
    flex: none;
    padding-left: 1px;
    padding-right: 16px;
    background: #d5d1ca;
}

.marks{
    position: absolute;
    top: 0;
    left: 0;
    pointer-events: none;
    fill: none;
    stroke: #f00;
    stroke-width: 2;
}
.faint{
    stroke: #fbdcdc;
}
.thick{
    stroke-width: 3;
}
```
FILE: ruler.js
```javascript
// one centimetre on screen
var CM = 38.5;

function shape(parent, name, attrs, text) {
    var el = document.createElementNS("http://www.w3.org/2000/svg", name);
    for (var key in attrs) el.setAttribute(key, attrs[key]);
    if (text !== undefined) el.textContent = text;
    parent.appendChild(el);
}

function rect(svg, x, y, w, h, fill, stroke) {
    shape(svg, "rect", {x: x, y: y, width: w, height: h, fill: fill, stroke: stroke || "none"});
}

// horizontal: 2 cm margin, 17 cm text, 2 cm margin
var h = document.getElementById("hruler");
rect(h, 0.5, 0.5, 77, 15, "#d5d1ca", "#808080");
rect(h, 78, 0, 655, 16, "#fff");
rect(h, 732.5, 0.5, 78, 15, "#d5d1ca", "#808080");
for (var i = -7; i < 76; i++) {
    var x = Math.round(78 + i * CM / 4);
    if (i % 4 === 0) {
        if (i) shape(h, "text", {x: x, y: 13, "text-anchor": "middle"}, Math.abs(i / 4));
    } else if (i % 2 === 0) {
        rect(h, x, 7, 1, 3, "#000");
    } else {
        rect(h, x, 8, 1, 1, "#000");
    }
}
shape(h, "text", {x: 809, y: 13, "text-anchor": "middle"}, 19);
for (var t = 1; t < 14; t++) {
    var tx = Math.round(77 + t * CM * 1.25);
    rect(h, tx, 12, 1, 3, "#000");
    rect(h, tx - 2, 15, 5, 1, "#000");
}
shape(h, "path", {d: "M74 .5h8v3l-3 4.500 3 4.500v3h-8v-3l3-4.500-3-4.500z", fill: "#e8e6e1", stroke: "#555"});
shape(h, "path", {d: "M728 15.500v-3l4-4 4 4v3z", fill: "#e8e6e1", stroke: "#555"});

// vertical
var v = document.getElementById("vruler");
rect(v, 0.5, 0.5, 15, 76, "#d5d1ca", "#808080");
rect(v, 0, 77, 16, 2000, "#fff");
for (var j = -7; j < 60; j++) {
    var y = Math.round(77 + j * CM / 4);
    if (j % 4 === 0) {
        if (j) shape(v, "text", {x: 13, y: y, "text-anchor": "middle", transform: "rotate(-90 13 " + y + ")"}, Math.abs(j / 4));
    } else if (j % 2 === 0) {
        rect(v, 7, y, 3, 1, "#000");
    } else {
        rect(v, 8, y, 1, 1, "#000");
    }
}
```
